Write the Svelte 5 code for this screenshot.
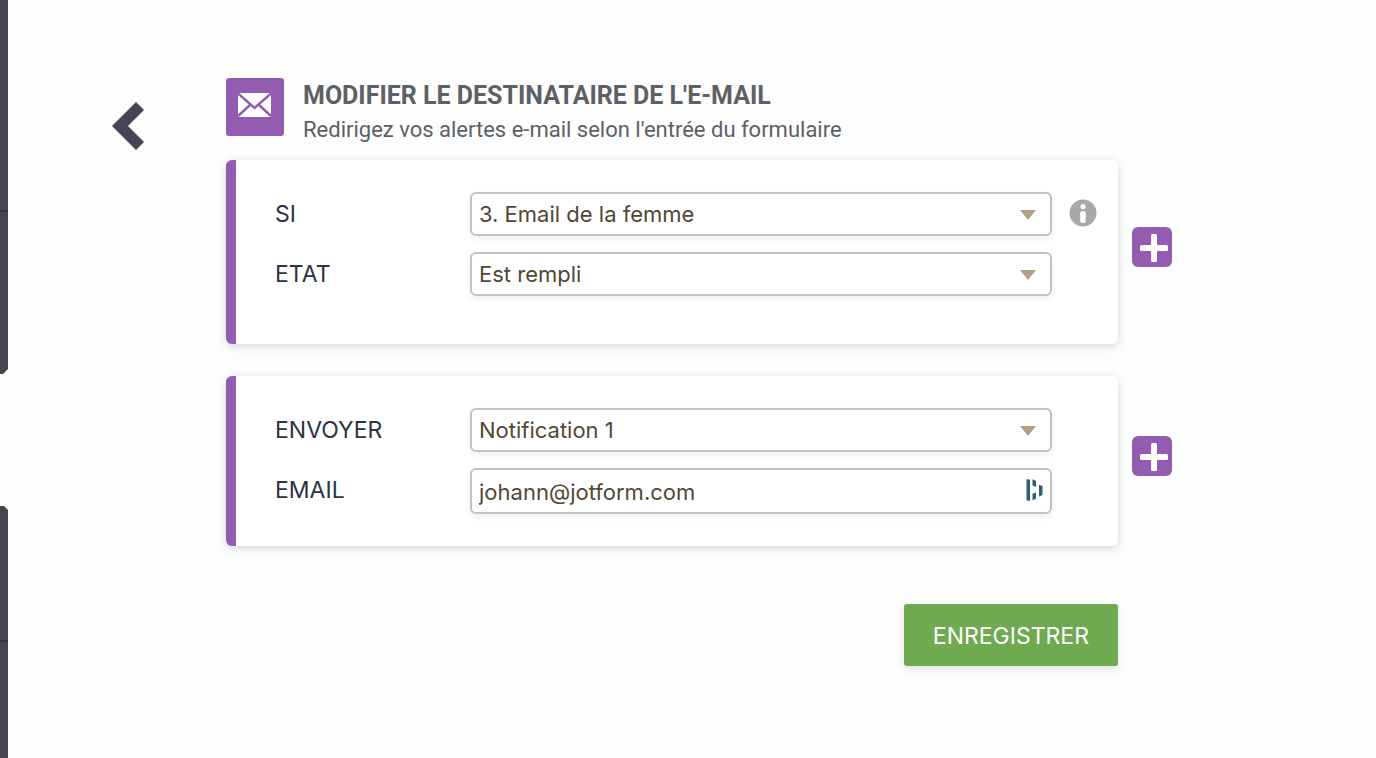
<script lang="ts">
	let field = $state('3. Email de la femme');
	let condition = $state('Est rempli');
	let notification = $state('Notification 1');
	let email = $state('johann@jotform.com');
</script>

{#snippet addButton(label: string)}
	<button class="add" type="button" aria-label={label}>
		<svg viewBox="0 0 40 40" aria-hidden="true">
			<rect x="8" y="18" width="28" height="6" rx="1.5" />
			<rect x="19" y="7" width="6" height="28" rx="1.5" />
		</svg>
	</button>
{/snippet}

<div class="page">
	<!-- edge of the collapsed side panels -->
	<div class="rail" aria-hidden="true">
		<div class="panel top"></div>
		<div class="panel bottom"></div>
	</div>

	<main>
		<button class="back" type="button" aria-label="Retour">
			<svg viewBox="0 0 32 48" aria-hidden="true">
				<path d="M24 0 32 8 16 24 32 40 24 48 0 24Z" />
			</svg>
		</button>

		<form onsubmit={(e) => e.preventDefault()}>
			<header>
				<div class="badge">
					<svg viewBox="0 0 34 26" aria-hidden="true">
						<rect x="0" y="1" width="33" height="24" fill="#fff" />
						<path d="M0 1.5 16.5 16 33 1.5M0 24 12.5 12.5M33 24 20.5 12.5" fill="none" stroke="#935cb0" stroke-width="2.4" />
					</svg>
				</div>
				<div class="titles">
					<h1>MODIFIER LE DESTINATAIRE DE L'E-MAIL</h1>
					<p>Redirigez vos alertes e-mail selon l'entrée du formulaire</p>
				</div>
			</header>

			<div class="group">
				<section class="card condition">
					<div class="row">
						<label for="field">SI</label>
						<div class="control">
							<select id="field" bind:value={field}>
								<option>3. Email de la femme</option>
							</select>
							<svg class="caret" viewBox="0 0 16 10" aria-hidden="true"><path d="M0 0H16L8 10Z" /></svg>
						</div>
						<button class="info" type="button" aria-label="Informations">
							<svg viewBox="0 0 28 28" aria-hidden="true">
								<circle cx="14" cy="14" r="13.5" fill="#a9a9a9" />
								<circle cx="14" cy="7.5" r="2.6" fill="#fff" />
								<rect x="11.2" y="12" width="5.6" height="12" rx="2.5" fill="#fff" />
							</svg>
						</button>
					</div>
					<div class="row">
						<label for="condition">ETAT</label>
						<div class="control">
							<select id="condition" bind:value={condition}>
								<option>Est rempli</option>
							</select>
							<svg class="caret" viewBox="0 0 16 10" aria-hidden="true"><path d="M0 0H16L8 10Z" /></svg>
						</div>
					</div>
				</section>
				{@render addButton('Ajouter une condition')}
			</div>

			<div class="group">
				<section class="card">
					<div class="row">
						<label for="notification">ENVOYER</label>
						<div class="control">
							<select id="notification" bind:value={notification}>
								<option>Notification 1</option>
							</select>
							<svg class="caret" viewBox="0 0 16 10" aria-hidden="true"><path d="M0 0H16L8 10Z" /></svg>
						</div>
					</div>
					<div class="row">
						<label for="email">EMAIL</label>
						<div class="control">
							<input id="email" type="text" bind:value={email} />
							<svg class="autofill" viewBox="0 0 17 22" aria-hidden="true">
								<path d="M0.5 0 4 0.7V22L0.5 21.3ZM6.5 0.3 10 1.7V8L6.5 6.6ZM6.5 14.8 10 13.5V19.7L6.5 21.3ZM13 5.7 16.5 7V16L13 17.5Z" />
							</svg>
						</div>
					</div>
				</section>
				{@render addButton('Ajouter un destinataire')}
			</div>

			<div class="actions">
				<button class="save" type="submit">ENREGISTRER</button>
			</div>
		</form>
	</main>
</div>

<style>
	:global(body) {
		margin: 0;
		background: #fdfdfd;
	}

	.page {
		display: flex;
		min-height: 100vh;
		font-family: Inter, 'Liberation Sans', sans-serif;
		font-size: 23px;
		color: #2c3345;
	}

	button {
		padding: 0;
		border: 0;
		background: none;
		cursor: pointer;
	}

	svg {
		display: block;
	}

	.rail {
		display: flex;
		flex-direction: column;
		gap: 132px;
		width: 8px;
	}

	.panel.top {
		height: 374px;
		background: linear-gradient(#343743, #343743) 0 210px / 100% 2px no-repeat #434652;
		clip-path: polygon(0 0, 100% 0, 100% calc(100% - 5px), 3px 100%, 0 100%);
	}

	.panel.bottom {
		flex: 1;
		background: linear-gradient(#343743, #343743) 0 134px / 100% 2px no-repeat #434652;
		clip-path: polygon(0 0, 4px 0, 100% 4px, 100% 100%, 0 100%);
	}

	main {
		display: flex;
		align-items: flex-start;
		flex: 1;
		gap: 82px;
		padding: 78px 204px 40px 104px;
	}

	.back {
		margin-top: 24px;
	}

	.back svg {
		width: 32px;
		height: 48px;
		fill: #434652;
	}

	form {
		flex: 1;
		min-width: 0;
	}

	header {
		display: flex;
		gap: 19px;
		margin-bottom: 14px;
	}

	.badge {
		display: flex;
		justify-content: center;
		flex-shrink: 0;
		box-sizing: border-box;
		width: 58px;
		height: 58px;
		padding-top: 14px;
		border-radius: 3px;
		background: #935cb0;
	}

	.badge svg {
		width: 34px;
		height: 26px;
	}

	.titles {
		font-family: Roboto, sans-serif;
		color: #5c6166;
	}

	h1 {
		margin: 0;
		font-size: 25px;
		font-weight: 700;
		line-height: 36px;
	}

	p {
		margin: 0;
		font-size: 22px;
		line-height: 32px;
	}

	.group {
		display: flex;
		align-items: center;
		gap: 14px;
		margin-bottom: 32px;
	}

	.card {
		display: flex;
		flex-direction: column;
		flex: 1;
		gap: 16px;
		padding: 32px 0 32px 39px;
		border-left: 10px solid #935cb0;
		border-radius: 6px;
		background: #fff;
		box-shadow: 0 2px 10px rgba(0, 0, 0, 0.16);
	}

	.card.condition {
		padding-bottom: 48px;
	}

	.row {
		display: grid;
		grid-template-columns: 195px 1fr 66px;
	}

	label {
		line-height: 44px;
	}

	.control {
		position: relative;
	}

	select,
	input {
		display: block;
		box-sizing: border-box;
		width: 100%;
		height: 44px;
		padding: 0 44px 0 7px;
		border: 2px solid #c3c3c3;
		border-radius: 6px;
		background: #fff;
		box-shadow: 0 3px 6px rgba(60, 50, 30, 0.08);
		font: inherit;
		font-size: 22px;
		color: #534733;
		appearance: none;
	}

	input {
		height: 46px;
		padding-top: 2px;
	}

	.caret {
		position: absolute;
		top: 18px;
		right: 16px;
		width: 16px;
		height: 10px;
		fill: #b0a084;
		pointer-events: none;
	}

	.autofill {
		position: absolute;
		top: 11px;
		right: 9px;
		width: 17px;
		height: 22px;
		fill: #2c6275;
	}

	.info {
		align-self: start;
		justify-self: start;
		margin: 7px 0 0 17px;
	}

	.info svg {
		width: 28px;
		height: 28px;
	}

	.add {
		flex-shrink: 0;
		width: 40px;
		height: 40px;
		margin-bottom: 10px;
		border-radius: 6px;
		background: #935cb0;
	}

	.add svg {
		fill: #fff;
	}

	.actions {
		display: flex;
		justify-content: flex-end;
		padding: 26px 54px 0 0;
	}

	.save {
		padding: 18px 29px 16px;
		border-radius: 3px;
		background: #6fa950;
		box-shadow: 0 3px 8px rgba(0, 0, 0, 0.1);
		font: inherit;
		line-height: 28px;
		color: #fff;
	}
</style>
